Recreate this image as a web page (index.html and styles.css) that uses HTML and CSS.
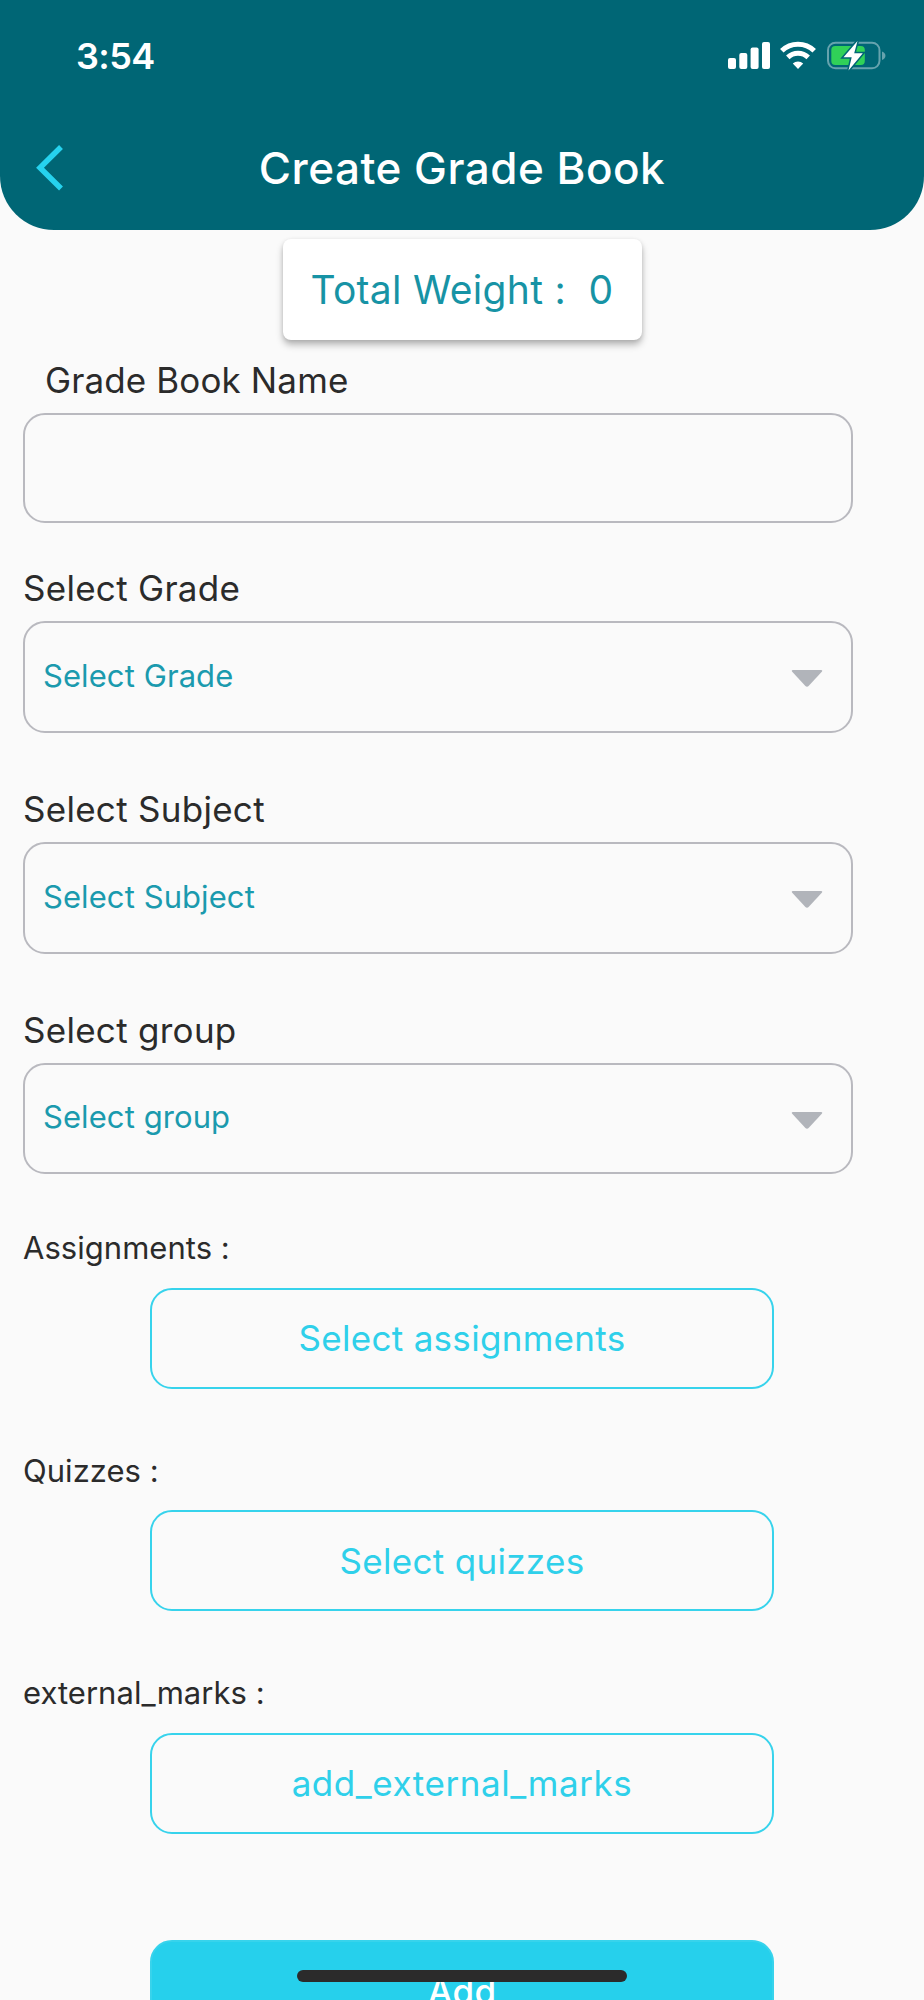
FILE: index.html
```html
<!DOCTYPE html>
<html lang="en">
  <head>
    <meta charset="UTF-8" />
    <meta name="viewport" content="width=device-width, initial-scale=1.0" />
    <title>Create Grade Book</title>
    <link rel="stylesheet" href="styles.css">
  </head>
  <body>
    <header class="header">
      <div class="status">
        <span class="time">3:54</span>
        <svg class="status-icons" width="160" height="32" viewBox="0 0 160 32">
          <!-- signal -->
          <g fill="#fff">
            <rect x="0" y="18" width="8" height="11" rx="2" />
            <rect x="11.3" y="13" width="8" height="16" rx="2" />
            <rect x="22.6" y="7.5" width="8" height="21.5" rx="2" />
            <rect x="34" y="2" width="8" height="27" rx="2" />
          </g>
          <!-- wifi -->
          <g fill="none" stroke="#fff" stroke-width="5">
            <path d="M53.8 10.7a23.3 23.3 0 0 1 32.4 0" />
            <path d="M59.8 17.4a14.8 14.8 0 0 1 20.4 0" />
          </g>
          <path d="M70 29l-5.2-5.5a7.6 7.6 0 0 1 10.4 0z" fill="#fff" />
          <!-- battery -->
          <rect x="100" y="2.7" width="51.5" height="25.6" rx="7.5" fill="none" stroke="#66a3ae" stroke-width="2" />
          <path d="M154 11.5c4.6 1.4 4.6 7 0 8.4z" fill="#66a3ae" />
          <rect x="103.3" y="6" width="33.5" height="19" rx="4" fill="#30d158" />
          <path d="M129.5 1l-14 16.2h8.2l-3.2 13.3 14.3-17.3h-8.6z" fill="#fff" stroke="#006675" stroke-width="3" paint-order="stroke" />
        </svg>
      </div>
      <div class="navbar">
        <a href="#" class="back">
          <svg width="28" height="46" viewBox="0 0 28 46">
            <path d="M25 2L4 22.7L25 43.5" fill="none" stroke="#26d2ee" stroke-width="5.5" />
          </svg>
        </a>
        <h1 class="title">Create Grade Book</h1>
      </div>
    </header>
    <main class="content">
      <div class="total">Total Weight :&nbsp; 0</div>
      <form class="form">
        <div class="field">
          <label class="label indent">Grade Book Name</label>
          <div class="box name"></div>
        </div>
        <div class="field select">
          <label class="label">Select Grade</label>
          <div class="box">
            <span class="hint">Select Grade</span>
            <svg class="arrow" width="32" height="18" viewBox="0 0 32 18"><path d="M2 1h28q2 0 .8 1.8L17.6 17q-1.6 1.6-3.2 0L1.2 2.8Q0 1 2 1z" /></svg>
          </div>
        </div>
        <div class="field select">
          <label class="label">Select Subject</label>
          <div class="box">
            <span class="hint">Select Subject</span>
            <svg class="arrow" width="32" height="18" viewBox="0 0 32 18"><path d="M2 1h28q2 0 .8 1.8L17.6 17q-1.6 1.6-3.2 0L1.2 2.8Q0 1 2 1z" /></svg>
          </div>
        </div>
        <div class="field select">
          <label class="label">Select group</label>
          <div class="box">
            <span class="hint">Select group</span>
            <svg class="arrow" width="32" height="18" viewBox="0 0 32 18"><path d="M2 1h28q2 0 .8 1.8L17.6 17q-1.6 1.6-3.2 0L1.2 2.8Q0 1 2 1z" /></svg>
          </div>
        </div>
        <div class="group">
          <p class="caption">Assignments :</p>
          <button type="button" class="btn">Select assignments</button>
        </div>
        <div class="group">
          <p class="caption">Quizzes :</p>
          <button type="button" class="btn">Select quizzes</button>
        </div>
        <div class="group">
          <p class="caption">external_marks :</p>
          <button type="button" class="btn marks">add_external_marks</button>
        </div>
        <button type="button" class="btn add">Add</button>
      </form>
    </main>
    <div class="home-bar"></div>
  </body>
</html>
```
FILE: styles.css
```css
* {
  box-sizing: border-box;
}
body {
  position: relative;
  height: 2000px;
  margin: 0;
  overflow: hidden;
  background-color: #fafafa;
  color: #2b2b2b;
  font-family: Inter, "Liberation Sans", sans-serif;
}
h1,
p {
  margin: 0;
}
.header {
  height: 230px;
  padding-top: 32px;
  border-radius: 0 0 54px 54px;
  background-color: #006675;
  color: #fff;
}
.status {
  display: flex;
  justify-content: space-between;
  height: 48px;
  padding: 0 36px 0 76px;
}
.time {
  font-size: 36px;
  font-weight: 600;
  line-height: 48px;
  letter-spacing: -0.6px;
}
.status-icons {
  margin-top: 8px;
}
.navbar {
  display: grid;
  grid-template-columns: 100px 1fr 100px;
  align-items: center;
  margin-top: 58px;
}
.back {
  height: 46px;
  padding-left: 36px;
}
.title {
  text-align: center;
  font-size: 44px;
  font-weight: 500;
  line-height: 60px;
  letter-spacing: 0.5px;
}
.content {
  padding-top: 9px;
}
.total {
  width: 359px;
  height: 101px;
  margin: 0 auto;
  border-radius: 8px;
  background-color: #fff;
  box-shadow: 0 5px 7px rgba(0, 0, 0, 0.26), 0 1px 4px rgba(0, 0, 0, 0.1);
  color: #1793a5;
  text-align: center;
  font-size: 39px;
  line-height: 101px;
  letter-spacing: 0.3px;
}
.form {
  padding: 18px 0 0 23px;
}
.field {
  width: 830px;
  margin-bottom: 43px;
}
.field.select {
  margin-bottom: 54px;
}
.label {
  display: block;
  margin-bottom: 11px;
  font-size: 35px;
  line-height: 44px;
  letter-spacing: 0.28px;
}
.label.indent {
  padding-left: 22px;
  letter-spacing: 0.12px;
}
.box {
  display: flex;
  align-items: center;
  justify-content: space-between;
  height: 111.8px;
  padding: 0 28px 3px 18px;
  border: 2px solid #b9b9bf;
  border-radius: 22px;
}
.box.name {
  height: 110px;
}
.hint {
  color: #1b9aae;
  font-size: 31px;
  letter-spacing: 0.08px;
}
.arrow {
  margin-top: 6px;
  fill: #b1b4ba;
}
.group {
  margin-bottom: 62px;
}
.caption {
  margin-bottom: 19.5px;
  font-size: 31px;
  line-height: 40px;
  letter-spacing: 0.03px;
}
.btn {
  display: block;
  width: 624px;
  height: 101px;
  margin-left: 127px;
  padding: 0;
  border: 2px solid #37d3ec;
  border-radius: 22px;
  background-color: transparent;
  color: #2fd0ea;
  font-family: inherit;
  font-size: 35px;
  letter-spacing: 0.3px;
}
.btn.marks {
  letter-spacing: 0.55px;
}
.btn.add {
  margin-top: 106px;
  padding-top: 2px;
  background-color: #26d0ec;
  color: #fff;
  font-weight: 500;
}
.home-bar {
  position: absolute;
  left: 297px;
  top: 1970px;
  width: 330px;
  height: 12px;
  border-radius: 6px;
  background-color: #2b2b2b;
}
```
